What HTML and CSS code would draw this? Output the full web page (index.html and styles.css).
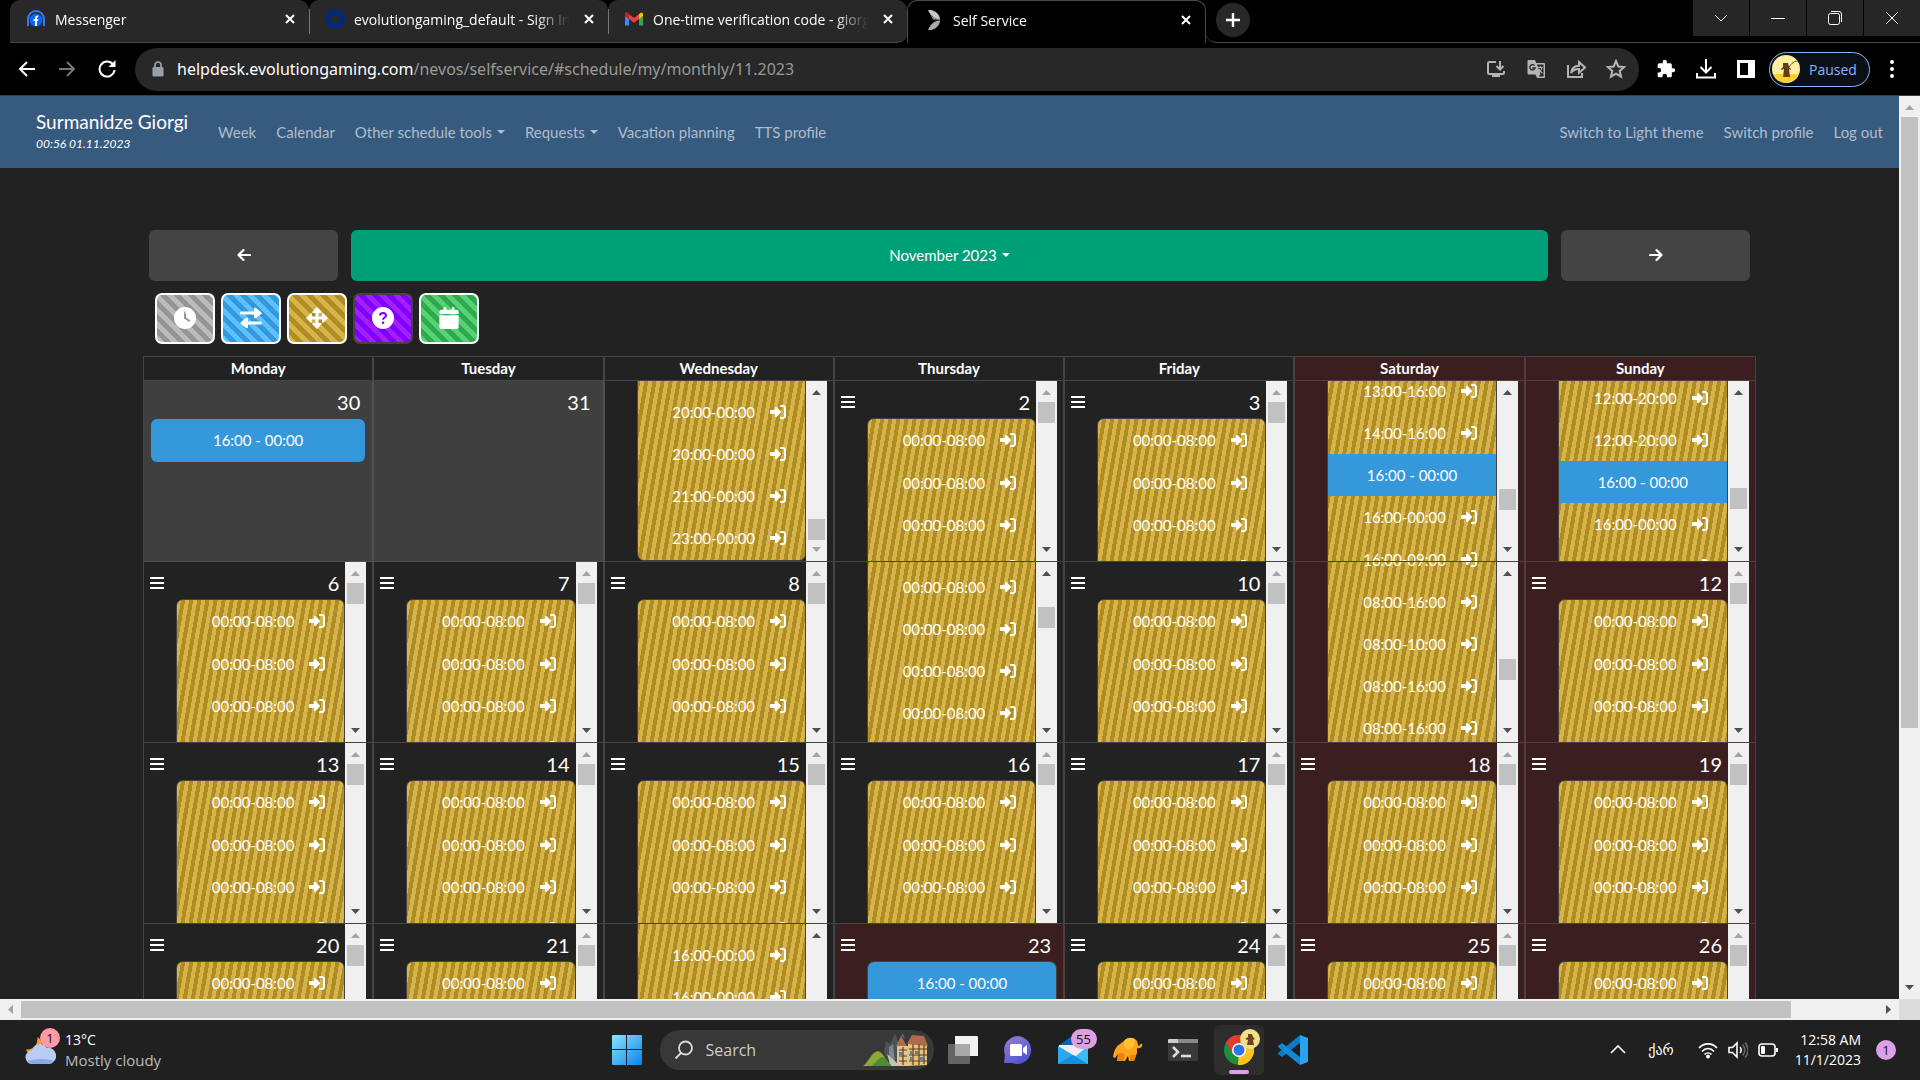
FILE: index.html
```html
<!DOCTYPE html>
<html lang="en">
<head>
<meta charset="utf-8">
<meta name="viewport" content="width=device-width, initial-scale=1">
<title>Self Service</title>
<link rel="stylesheet" href="styles.css">
</head>
<body>
<svg class="sprite" aria-hidden="true">
  <symbol id="i-close" viewBox="0 0 12 12"><path d="M2 2l8 8M10 2l-8 8" stroke="currentColor" stroke-width="2" fill="none"/></symbol>
  <symbol id="i-enter" viewBox="0 0 512 512"><path fill="currentColor" d="M217.900 105.900L340.700 228.700c7.200 7.200 11.300 17.100 11.300 27.300s-4.100 20.100-11.300 27.300L217.900 406.100c-6.400 6.400-15 9.900-24 9.900c-18.700 0-33.900-15.200-33.900-33.900l0-62.100L32 320c-17.700 0-32-14.300-32-32l0-64c0-17.700 14.300-32 32-32l128 0 0-62.100c0-18.700 15.200-33.900 33.900-33.900c9 0 17.600 3.600 24 9.900zM352 416l64 0c17.700 0 32-14.300 32-32l0-256c0-17.700-14.300-32-32-32l-64 0c-17.700 0-32-14.300-32-32s14.300-32 32-32l64 0c53 0 96 43 96 96l0 256c0 53-43 96-96 96l-64 0c-17.700 0-32-14.300-32-32s14.300-32 32-32z"/></symbol>
  <symbol id="i-bars" viewBox="0 0 14 12"><path fill="currentColor" d="M0 0h14v2H0zM0 5h14v2H0zM0 10h14v2H0z"/></symbol>
  <symbol id="i-up" viewBox="0 0 9 5"><path fill="currentColor" d="M0 5L4.500 0L9 5z"/></symbol>
  <symbol id="i-down" viewBox="0 0 9 5"><path fill="currentColor" d="M0 0L4.500 5L9 0z"/></symbol>
  <symbol id="i-left" viewBox="0 0 14 12"><path d="M13 6H2M6.500 1L1.500 6l5 5" stroke="currentColor" stroke-width="2.200" stroke-linecap="round" stroke-linejoin="round" fill="none"/></symbol>
  <symbol id="i-right" viewBox="0 0 14 12"><path d="M1 6h11M7.500 1l5 5-5 5" stroke="currentColor" stroke-width="2.200" stroke-linecap="round" stroke-linejoin="round" fill="none"/></symbol>
</svg>

<header class="tabs">
  <a class="tab" href="#messenger">
    <svg class="favicon" viewBox="0 0 20 20"><path d="M2 17V10a8 8 0 0 1 16 0v7" fill="none" stroke="#3b78e7" stroke-width="2"/><circle cx="10" cy="11" r="6.500" fill="#0866ff"/><path d="M9 17v-5H7.500v-2H9V9c0-1.800 1-2.700 3.200-2.500v1.800c-1 0-1.300.2-1.300 1V10h1.300l-.3 2h-1v5z" fill="#fff"/></svg>
    <span class="tab-title">Messenger</span>
    <svg class="tab-close"><use href="#i-close"/></svg>
  </a>
  <a class="tab" href="#signin">
    <svg class="favicon" viewBox="0 0 20 20"><circle cx="10" cy="10" r="7.200" fill="none" stroke="#00297a" stroke-width="5.500"/></svg>
    <span class="tab-title">evolutiongaming_default - Sign In</span>
    <svg class="tab-close"><use href="#i-close"/></svg>
  </a>
  <a class="tab" href="#mail">
    <svg class="favicon" viewBox="0 0 20 20"><path d="M1 5v11.500h4V9z" fill="#4285f4"/><path d="M19 5v11.500h-4V9z" fill="#34a853"/><path d="M15 5l2-1.300c1-.7 2 .3 2 1.300v2l-4 3z" fill="#fbbc04"/><path d="M1 7V5c0-1.200 1-2 2-1.300l7 5.300 5-4v5l-5 3.700z" fill="#ea4335"/><path d="M1 7V5c0-1.200 1-2 2-1.300L5 5v5z" fill="#c5221f"/></svg>
    <span class="tab-title">One-time verification code - giorgi</span>
    <svg class="tab-close"><use href="#i-close"/></svg>
  </a>
  <a class="tab tab-active" href="#self-service">
    <svg class="favicon" viewBox="0 0 20 20"><path d="M4 0c6-1 12 4 12 9.700C12 9.500 7 7 4 0z" fill="#c4c6c8"/><path d="M4 20c6 1 12-4 12-9.700C12 10.500 7 13 4 20z" fill="#a9abad"/><path d="M4 0c2 5 6 9 12 9.700L9 9.500z" fill="#8e9092"/></svg>
    <span class="tab-title">Self Service</span>
    <svg class="tab-close"><use href="#i-close"/></svg>
  </a>
  <div class="strip-end">
    <button class="new-tab" aria-label="New tab"><svg viewBox="0 0 16 16"><path d="M8 1v14M1 8h14" stroke="#fff" stroke-width="2.400"/></svg></button>
    <div class="window-buttons">
      <button aria-label="Search tabs"><svg viewBox="0 0 14 14"><path d="M1 4l6 6 6-6" class="hair"/></svg></button>
      <button aria-label="Minimize"><svg viewBox="0 0 14 14"><path d="M0 7.500h14" class="hair"/></svg></button>
      <button aria-label="Restore"><svg viewBox="0 0 14 14"><rect x=".5" y="2.500" width="11" height="11" rx="2" class="hair"/><path d="M3 .500h8a2.500 2.500 0 0 1 2.500 2.500v8" class="hair"/></svg></button>
      <button aria-label="Close"><svg viewBox="0 0 14 14"><path d="M1 1l12 12M13 1L1 13" class="hair"/></svg></button>
    </div>
  </div>
</header>

<div class="toolbar">
  <div class="history">
    <button aria-label="Back"><svg viewBox="0 0 18 18"><path d="M17 9H2M9 2L2 9l7 7" class="line"/></svg></button>
    <button aria-label="Forward" class="is-off"><svg viewBox="0 0 18 18"><path d="M1 9h15M9 2l7 7-7 7" class="line"/></svg></button>
    <button aria-label="Reload"><svg viewBox="0 0 18 18"><path d="M15 4.500A7.500 7.500 0 1 0 16.500 10" class="line"/><path d="M17.500 0v7h-7z" fill="currentColor"/></svg></button>
  </div>
  <div class="omnibox">
    <svg class="lock" viewBox="0 0 12 16"><path fill="none" stroke="#9aa0a6" stroke-width="1.700" d="M3 7V4a3 3 0 0 1 6 0v3"/><rect x=".5" y="6" width="11" height="9.500" rx="1.300" fill="#9aa0a6"/></svg>
    <div class="url"><b>helpdesk.evolutiongaming.com</b>/nevos/selfservice/#schedule/my/monthly/11.2023</div>
    <div class="omni-icons">
      <button aria-label="Install"><svg viewBox="0 0 20 20"><path d="M10 3H3.500a1.500 1.500 0 0 0-1.500 1.500v9A1.500 1.500 0 0 0 3.500 15h13a1.500 1.500 0 0 0 1.500-1.500V12M14 2v8M10.500 7L14 10.500 17.500 7" class="soft"/><path d="M6 15h8v3H6z" fill="currentColor"/></svg></button>
      <button aria-label="Translate"><svg viewBox="0 0 20 20"><path d="M2.500 1H9l1.200 3H18a1 1 0 0 1 1 1v13a1 1 0 0 1-1 1h-7l-1.500-3.500H2.500a1 1 0 0 1-1-1V2a1 1 0 0 1 1-1z" fill="#b4b4b4"/><path d="M11 5.500h6.500v12h-5l2-2z" fill="#282828"/><path d="M8.500 6.600A2.600 2.600 0 1 0 9 9H6.500" fill="none" stroke="#282828" stroke-width="1.400"/><path d="M11.800 8.500h5M14.300 7v1.500M16 8.500c-.5 2.500-2 4-3 4.700M12.800 10c.8 2 2 3 3.700 4" fill="none" stroke="#b4b4b4" stroke-width="1.100"/></svg></button>
      <button aria-label="Share"><svg viewBox="0 0 20 20"><path d="M2 6v12h14v-4M5 14c.5-4 3-7 8-7.200V3l6 5.500-6 5.300V10c-3.500 0-6 1-8 4z" class="soft"/></svg></button>
      <button aria-label="Bookmark"><svg viewBox="0 0 20 20"><path d="M10 2l2.300 5.500 6 .5-4.600 3.900 1.400 5.800L10 14.600l-5.100 3.100 1.400-5.800L1.700 8l6-.5z" class="soft"/></svg></button>
    </div>
  </div>
  <div class="extensions">
    <button aria-label="Extensions"><svg viewBox="0 0 24 24"><path fill="currentColor" d="M20.500 11H19V7c0-1.100-.9-2-2-2h-4V3.500a2.500 2.500 0 0 0-5 0V5H4c-1.100 0-2 .9-2 2v3.800h1.500a2.700 2.700 0 0 1 0 5.400H2V20c0 1.100.9 2 2 2h3.800v-1.500a2.700 2.700 0 0 1 5.400 0V22H17c1.100 0 2-.9 2-2v-4h1.500a2.500 2.500 0 0 0 0-5z"/></svg></button>
    <button aria-label="Downloads"><svg viewBox="0 0 20 20"><path d="M10 0v13M4.500 8l5.500 5.500L15.500 8M1 14v4.500h18V14" class="line"/></svg></button>
    <button aria-label="Side panel"><svg viewBox="0 0 20 20"><path fill="currentColor" fill-rule="evenodd" d="M1 1h18v18H1zM4 4v12h8V4z"/></svg></button>
  </div>
  <button class="profile">
    <svg viewBox="0 0 28 28"><circle cx="14" cy="14" r="14" fill="#fdf0a0"/><path d="M1 19a14 14 0 0 0 26 0z" fill="#fdd02f"/><path d="M11 8h5l1 4 2 2v1l-2-1 1 8h-7l1-8-3 1v-1l2-2z" fill="#6b3a1c"/><path d="M17 12c3-4 5-6 9-6" fill="none" stroke="#6b3a1c" stroke-width="1"/></svg>
    Paused
  </button>
  <button class="kebab" aria-label="Menu"><svg viewBox="0 0 4 18"><circle cx="2" cy="2" r="2" fill="#fff"/><circle cx="2" cy="9" r="2" fill="#fff"/><circle cx="2" cy="16" r="2" fill="#fff"/></svg></button>
</div>

<div class="viewport">
  <main class="page">
    <nav class="navbar">
      <a class="brand" href="#home">Surmanidze Giorgi<small>00:56 01.11.2023</small></a>
      <a href="#week">Week</a>
      <a href="#calendar">Calendar</a>
      <a href="#tools" class="has-caret">Other schedule tools</a>
      <a href="#requests" class="has-caret">Requests</a>
      <a href="#vacation">Vacation planning</a>
      <a href="#tts">TTS profile</a>
      <a href="#theme" class="push">Switch to Light theme</a>
      <a href="#profile">Switch profile</a>
      <a href="#logout">Log out</a>
    </nav>

    <section class="schedule">
      <div class="month-bar">
        <button class="step" aria-label="Previous month"><svg><use href="#i-left"/></svg></button>
        <button class="month has-caret">November 2023</button>
        <button class="step" aria-label="Next month"><svg><use href="#i-right"/></svg></button>
      </div>

      <div class="filters">
        <button class="filter gray" aria-label="Overtime"><svg viewBox="0 0 512 512"><path fill="#fff" fill-rule="evenodd" d="M256 0a256 256 0 1 1 0 512A256 256 0 1 1 256 0zM232 120V256c0 8 4 15.500 10.700 20l96 64c11 7.400 25.900 4.400 33.300-6.700s4.400-25.900-6.700-33.300L280 243.200V120c0-13.300-10.700-24-24-24s-24 10.700-24 24z"/></svg></button>
        <button class="filter blue" aria-label="Swap"><svg viewBox="0 0 22 22"><path fill="#fff" d="M1 4.500h13V2c0-1.200 1.200-1.600 2-.9l5.200 4.200c.6.500.6 1.300 0 1.800L16 11c-.8.700-2 .2-2-.9V7.500H1c-1.300 0-1.300-3 0-3zM21 14.500H8V12c0-1.200-1.200-1.600-2-.9L.800 15.300c-.6.500-.6 1.300 0 1.800L6 21c.8.700 2 .2 2-.9v-2.600h13c1.300 0 1.300-3 0-3z"/></svg></button>
        <button class="filter gold" aria-label="Move"><svg viewBox="0 0 22 22"><path fill="#fff" d="M11 0l4.500 4.500c.5 1-.1 1.500-.8 1.500h-2.200v3.500H16V7.300c0-.8.700-1.300 1.500-.8L22 11l-4.500 4.500c-.8.500-1.500 0-1.500-.8v-2.200h-3.500V16h2.200c.8 0 1.300.6.800 1.500L11 22l-4.500-4.500c-.5-.9 0-1.500.8-1.500h2.200v-3.500H6v2.200c0 .8-.7 1.300-1.500.8L0 11l4.500-4.500c.8-.5 1.500 0 1.500.8v2.200h3.500V6H7.300c-.8 0-1.300-.5-.8-1.500z"/></svg></button>
        <button class="filter purple" aria-label="Unknown"><svg viewBox="0 0 22 22"><circle cx="11" cy="11" r="11" fill="#fff"/><path d="M8 8.500c0-3.500 6-3.500 6 0 0 2-3 2-3 4.200" fill="none" stroke="#8000ff" stroke-width="2"/><circle cx="11" cy="15.800" r="1.300" fill="#8000ff"/></svg></button>
        <button class="filter green" aria-label="Vacation"><svg viewBox="-32 0 512 512"><path fill="#fff" d="M96 32V64H48C21.500 64 0 85.500 0 112v48H448V112c0-26.500-21.500-48-48-48H352V32c0-17.700-14.300-32-32-32s-32 14.300-32 32V64H160V32c0-17.700-14.300-32-32-32S96 14.300 96 32zM448 192H0V464c0 26.500 21.500 48 48 48H400c26.500 0 48-21.500 48-48V192z"/></svg></button>
      </div>

      <table class="calendar">
        <thead>
          <tr><th>Monday</th><th>Tuesday</th><th>Wednesday</th><th>Thursday</th><th>Friday</th><th class="holiday">Saturday</th><th class="holiday">Sunday</th></tr>
        </thead>
        <tbody id="days"></tbody>
      </table>
    </section>
  </main>

  <div class="bar bar-y">
    <svg class="arrow is-off"><use href="#i-up"/></svg>
    <i class="thumb"></i>
    <svg class="arrow"><use href="#i-down"/></svg>
  </div>
  <div class="bar bar-x">
    <svg class="arrow-side is-off" viewBox="0 0 5 9"><path fill="currentColor" d="M5 0v9L0 4.500z"/></svg>
    <i class="thumb"></i>
    <svg class="arrow-side" viewBox="0 0 5 9"><path fill="currentColor" d="M0 0v9l5-4.500z"/></svg>
  </div>
  <div class="corner"></div>
</div>

<footer class="taskbar">
  <div class="weather">
    <div class="weather-icon">
      <svg viewBox="0 0 32 32"><path d="M13 3c0 9-4 13-12 13 2 5 7 7 11 5l6-7c0-5-2-9-5-11z" fill="#f5a12c"/><path d="M8 31a7 7 0 0 1-1-14 8.500 8.500 0 0 1 15-3 8 8 0 0 1 3 17z" fill="#b7cdf3"/><path d="M8 31a7 7 0 0 1-5-3c6-3 20-3 27 0a8 8 0 0 1-5 3z" fill="#86a9ea"/></svg>
      <span class="badge pink">1</span>
    </div>
    <p>13°C<small>Mostly cloudy</small></p>
  </div>

  <div class="apps">
    <button class="app" aria-label="Start"><svg viewBox="0 0 30 30"><defs><linearGradient id="win" x2="1" y2="1"><stop stop-color="#8be4ff"/><stop offset="1" stop-color="#0a84ea"/></linearGradient></defs><path fill="url(#win)" d="M0 1a1 1 0 0 1 1-1h13v14H0zM15 0h14a1 1 0 0 1 1 1v13H15zM0 15h14v15H1a1 1 0 0 1-1-1zM15 15h15v14a1 1 0 0 1-1 1H15z"/></svg></button>
    <label class="search">
      <svg class="lens" viewBox="0 0 20 20"><circle cx="11.500" cy="8" r="6.500" fill="none" stroke="#ddd" stroke-width="1.800"/><path d="M7 13L1.500 18.500" stroke="#ddd" stroke-width="1.800"/></svg>
      <input type="text" placeholder="Search" aria-label="Search">
      <svg class="town" viewBox="0 0 66 34"><path d="M0 33c6-4 8-14 15-15 6 2 8 10 13 15z" fill="#8fa63c"/><path d="M8 33c5-3 8-9 12-9 4 2 6 6 8 9z" fill="#4e8b35"/><path d="M23 8l4 3 5-10 4 9v20l-8 3-7-14z" fill="#4b5358"/><path d="M26 14l4-3 2 20h-6z" fill="#7d868a"/><path d="M24 21l10 9 2 3h-8z" fill="#c9c5b4"/><path d="M34 13h12v20H34z" fill="#e2c48f"/><path d="M45 10h19v22l-19 1z" fill="#e7c377"/><path d="M33 13l5-10 6 10zM44 11l5-9 12 1 4 10z" fill="#b06a4c"/><path d="M38 3l2-3 2 6z" fill="#3f6c9a"/><path d="M36 17h8M36 23h8M36 28h8M46 16h18M46 22h18M46 28h18M50 11v21M56 11v21M61 12v19M40 14v18" stroke="#5a3d2b" stroke-width="1.200"/><path d="M36 19h3v3h-3zM47 18h2v3h-2zM52 18h3v3h-3zM57 24h3v3h-3zM47 24h2v3h-2z" fill="#4f86a8"/></svg>
    </label>
    <button class="app" aria-label="Task view"><svg viewBox="0 0 30 30"><path d="M7 1h22a1 1 0 0 1 1 1v19H7z" fill="#f2f2f2"/><rect y="9" width="22" height="20" rx="1" fill="#6c6c6c" opacity=".9"/><path d="M7 9h15v12H7z" fill="#a9a9a9"/></svg></button>
    <button class="app" aria-label="Chat"><svg viewBox="0 0 30 30"><defs><linearGradient id="chat" x2=".6" y2="1"><stop stop-color="#9a7fd0"/><stop offset="1" stop-color="#4f56d6"/></linearGradient></defs><path d="M15 1a14 14 0 1 1-6 27H1l1-8A14 14 0 0 1 15 1z" fill="url(#chat)"/><rect x="7" y="9" width="12" height="12" rx="1.500" fill="#fff"/><path d="M20 13l4-3v10l-4-3z" fill="#fff"/></svg></button>
    <button class="app" aria-label="Mail"><svg viewBox="0 0 30 30"><path d="M0 11L14 1l16 10v5H0z" fill="#0a63b8"/><path d="M1 10h28v8l-14 8L1 17z" fill="#ededf2"/><path d="M0 11l30 18H0z" fill="#2aa9ee"/><path d="M30 11v18H8z" fill="#38bdf5"/><path d="M0 29h30L15 20z" fill="#178edb"/></svg><span class="badge lilac wide">55</span></button>
    <button class="app" aria-label="Elephant"><svg viewBox="0 0 30 30"><path d="M11 6c3-4 10-4 13 0 1 3 1 5 2 5s1-3 3-2c1 3-2 5-5 4v5l-3 8h-5l-1-5-3 5H4l1-7-3 4-2-1C1 16 3 11 7 9z" fill="#fca51c"/><path d="M11 6c3-4 10-4 11-1l-1 6-5 4-5-3z" fill="#ffc22e"/><path d="M5 19c3-2 6-1 7 1l-2 6H4zM17 20h6l-2 6h-4z" fill="#f07f13"/></svg></button>
    <button class="app" aria-label="Terminal"><svg viewBox="0 0 30 30"><rect y="4" width="30" height="22" rx="1.500" fill="#3a3a3a"/><path d="M1 4h28a1 1 0 0 1 1 1v3H0V5a1 1 0 0 1 1-1z" fill="#8a8a8a"/><path d="M1 4h9v4H0V5z" fill="#ccc"/><path d="M5 12l5 5-5 5" fill="none" stroke="#ddd" stroke-width="2.600"/><path d="M13 21h10" stroke="#ddd" stroke-width="2.600"/></svg></button>
    <button class="app app-open" aria-label="Chrome"><svg viewBox="0 0 30 30"><circle cx="15" cy="15" r="15" fill="#1e8e3e"/><path d="M15 15L28 7.500A15 15 0 0 1 14 30z" fill="#fcc31e"/><path d="M2 7.500A15 15 0 0 1 28 7.500H15l-6.500 11z" fill="#e33b2e"/><circle cx="15" cy="15" r="7" fill="#fff"/><circle cx="15" cy="15" r="5.500" fill="#2a74e8"/></svg><svg class="avatar" viewBox="0 0 20 20"><circle cx="10" cy="10" r="10" fill="#efe08a"/><path d="M8 5h4l1 3 2 2-2 1 1 5H7l1-5-3-1 3-2z" fill="#70401f"/></svg></button>
    <button class="app" aria-label="Code"><svg viewBox="0 0 30 30"><path d="M22 0l8 3v24l-8 3z" fill="#2aa3ee"/><path d="M22 0v8L4 22l-4-3v-1z" fill="#0a7bc8"/><path d="M22 30v-8L4 8l-4 3v1z" fill="#1288d6"/></svg></button>
  </div>

  <div class="tray">
    <svg class="tray-icon" viewBox="0 0 18 18"><path d="M2 12l7-7 7 7" class="thin"/></svg>
    <span class="lang">ქარ</span>
    <div class="status">
      <svg class="tray-icon" viewBox="0 0 20 18"><path d="M1 7c5-5.500 13-5.500 18 0M4 10.500c3.500-4 8.500-4 12 0M6.500 13.500c2-2 5-2 7 0" class="thin"/><circle cx="10" cy="15.500" r="2" fill="#fff"/></svg>
      <svg class="tray-icon" viewBox="0 0 20 18"><path d="M1 6.500h3.500L9 2v14l-4.500-4.500H1zM12 6c1.500 1.500 1.500 4.500 0 6" class="thin"/><path d="M14.500 3.500c3 3 3 8 0 11M17 1.500c4 4.500 4 11 0 15" class="thin dim"/></svg>
      <svg class="tray-icon" viewBox="0 0 20 18"><rect x="1" y="3" width="16" height="12" rx="3" class="thin"/><path d="M18 7h2v4h-2z" fill="#fff"/><rect x="3" y="5" width="4" height="8" rx="1" fill="#fff"/></svg>
    </div>
    <p class="clock">12:58 AM<br>11/1/2023</p>
    <span class="badge lilac">1</span>
  </div>
</footer>
<script src="calendar.js"></script>
</body>
</html>
```
FILE: styles.css
```css
* { box-sizing: border-box; }

:root {
  --ui: "Open Sans", "Noto Sans", sans-serif;
  --line: #444;
  --gold: repeating-linear-gradient(100deg, #d6b34b, #d6b34b 4px, #b08d23 4px, #b08d23 8px);
}

body {
  margin: 0;
  height: 100vh;
  display: flex;
  flex-direction: column;
  overflow: hidden;
  background: #202020;
  color: #fff;
  font-family: var(--ui);
}

button, input {
  font: inherit;
  color: inherit;
  background: none;
  border: 0;
  padding: 0;
}
button { display: flex; align-items: center; justify-content: center; }
a { color: inherit; text-decoration: none; }
p { margin: 0; }
svg { display: block; flex: none; }
.sprite { position: absolute; width: 0; height: 0; }

.line { fill: none; stroke: currentColor; stroke-width: 2; }
.hair { fill: none; stroke: #fff; stroke-width: 1; }
.soft { fill: none; stroke: #b4b4b4; stroke-width: 2; }
.thin { fill: none; stroke: #fff; stroke-width: 1.6; }
.dim { stroke: #666; }

/* browser tabs */
.tabs {
  display: flex;
  height: 43px;
  padding-left: 10px;
  background: #000;
}
.tab {
  flex: 0 1 299px;
  min-width: 0;
  display: flex;
  align-items: center;
  gap: 9px;
  padding: 0 13px 4px 16px;
  background: #282828;
  border-bottom: 1px solid #4a4a4a;
  border-radius: 10px 10px 0 0;
  font-size: 14px;
}
.tab + .tab:not(.tab-active) { background: linear-gradient(#777, #777) 0 9px / 1px 25px no-repeat #282828; }
.tab:nth-child(3) { border-bottom-right-radius: 10px; }
.tab-active {
  background: #000;
  border: 1px solid #4a4a4a;
  border-bottom: 0;
}
.favicon { width: 20px; height: 20px; }
.tab-title {
  flex: 1;
  overflow: hidden;
  white-space: nowrap;
  mask-image: linear-gradient(90deg, #000 82%, transparent 98%);
}
.tab-close { width: 12px; height: 12px; }
.strip-end {
  flex: 1;
  display: flex;
  justify-content: space-between;
  align-items: flex-start;
  border-bottom: 1px solid #4a4a4a;
  border-bottom-left-radius: 10px;
}
.new-tab {
  width: 34px;
  height: 34px;
  margin: 3px 0 0 10px;
  border-radius: 50%;
  background: #282828;
}
.new-tab svg { width: 16px; }
.window-buttons { display: flex; }
.window-buttons button { width: 57px; height: 36px; border-left: 1px solid #000; background: #262626; }
.window-buttons svg { width: 14px; height: 14px; }

/* toolbar */
.toolbar {
  display: flex;
  align-items: center;
  height: 53px;
  padding: 0 26px 0 18px;
  background: #000;
  border-bottom: 1px solid #3c3c3c;
}
.history { display: flex; gap: 22px; margin-right: 19px; }
.history svg { width: 18px; }
.history .is-off { color: #777; }
.omnibox {
  flex: 1;
  display: flex;
  align-items: center;
  height: 43px;
  padding: 0 13px 0 17px;
  border-radius: 22px;
  background: #282828;
}
.lock { width: 12px; height: 16px; }
.url { flex: 1; margin-left: 13px; font-family: "Noto Sans", sans-serif; font-size: 16px; color: #999; white-space: nowrap; }
.url b { color: #fff; font-weight: 400; }
.omni-icons { display: flex; gap: 20px; color: #b4b4b4; }
.omni-icons svg { width: 20px; }
.extensions { display: flex; gap: 20px; margin: 0 13px 0 17px; }
.extensions svg { width: 20px; }
.profile {
  gap: 9px;
  width: 101px;
  height: 35px;
  padding-right: 10px;
  border: 1px solid #8ab4f8;
  border-radius: 18px;
  background: #0b1018;
  color: #8ab4f8;
  font-size: 14px;
}
.profile svg { width: 28px; }
.kebab { margin-left: 20px; }
.kebab svg { width: 4px; }

/* page and its scrollbars */
.viewport {
  flex: 1;
  min-height: 0;
  display: grid;
  grid-template: minmax(0, 1fr) 21px / minmax(0, 1fr) 21px;
}
.page {
  overflow: hidden;
  background: #222;
  font-family: Lato, sans-serif;
  font-size: 15px;
}
.bar, .scroll {
  display: flex;
  align-items: center;
  justify-content: space-between;
  background: #f0f0f0;
  color: #505050;
}
.bar .is-off, .scroll .is-off { color: #a3a3a3; }
.thumb { background: #c1c1c1; }
.arrow { width: 9px; height: 5px; }
.arrow-side { width: 5px; height: 9px; }
.bar-y { flex-direction: column; padding: 9px 0; }
.bar-y .thumb { width: 17px; flex: 0 0 69%; margin: 7px 0 auto; }
.bar-x { padding: 0 8px; }
.bar-x .thumb { height: 17px; flex: 0 0 94%; margin: 0 auto 0 8px; }
.corner { background: #dcdcdc; }

/* site navigation */
.navbar {
  display: flex;
  align-items: center;
  gap: 20px;
  height: 72px;
  padding: 0 16px 0 36px;
  background: #375a7f;
  color: #afbdcc;
  white-space: nowrap;
}
.brand { margin-right: 10px; font-size: 19px; line-height: 24px; color: #fff; }
.brand small { display: block; font-size: 12px; line-height: 20px; font-style: italic; }
.push { margin-left: auto; }
.has-caret::after {
  content: "";
  display: inline-block;
  margin-left: 5px;
  vertical-align: 4px;
  border: 4px solid transparent;
  border-top-color: currentColor;
  border-bottom: 0;
}

/* month picker and filters */
.schedule { padding: 62px 143px 0; }
.month-bar { display: flex; gap: 13px; padding: 0 6px; }
.month-bar button { height: 51px; padding-bottom: 2px; border-radius: 6px; }
.step { flex: 0 0 189px; background: #444; }
.step svg { width: 14px; height: 12px; }
.month { flex: 1; background: #00a077; }
.filters { display: flex; gap: 6px; padding: 12px; }
.filter {
  width: 60px;
  height: 51px;
  padding-bottom: 1px;
  border: 2px solid #fff;
  border-radius: 7px;
  background: repeating-linear-gradient(45deg, var(--a), var(--a) 5px, var(--b) 5px, var(--b) 10px);
}
.filter svg { width: 22px; height: 22px; }
.gray { --a: #bbb; --b: #959595; }
.blue { --a: #5dc0ff; --b: #3498db; }
.gold { --a: #d6b34b; --b: #b08d23; }
.purple { --a: #a020ff; --b: #8000ff; border-color: #444; }
.green { --a: #58d074; --b: #30a84e; }

/* calendar */
.calendar {
  width: 100%;
  table-layout: fixed;
  border-spacing: 0;
  border-left: 1px solid var(--line);
}
.calendar th, .calendar td {
  padding: 0;
  border-right: 2px solid var(--line);
  border-bottom: 1px solid var(--line);
}
.calendar th:last-child, .calendar td:last-child { border-right-width: 1px; }
.calendar th { height: 25px; padding-bottom: 2px; border-top: 1px solid var(--line); line-height: 20px; }
.calendar .holiday { background: #3a1e20; border-color: #4f4040; }
.calendar .outside { background: #3f3f3f; border-color: #505050; }
.cell { display: flex; height: 180px; padding: 0 6px; overflow: hidden; }
.pane { flex: 1; min-width: 0; overflow: hidden; }
.day {
  display: flex;
  align-items: center;
  justify-content: space-between;
  height: 37px;
  padding: 4px 6px 0 0;
}
.day svg { width: 14px; height: 12px; }
.day time { margin-left: auto; font-size: 20px; line-height: 32px; }
.shifts {
  margin: 0 0 1px 26px;
  padding: 0;
  list-style: none;
  overflow: hidden;
  border: 1px solid var(--line);
  border-radius: 7px;
  background: var(--gold);
}
.shifts li:first-child, .shifts li:last-child { min-height: 43px; }
.shifts button {
  width: 100%;
  height: 42px;
  gap: 15px;
  padding-left: 16px;
}
.shifts svg { width: 16px; height: 16px; }
.shifts .mine { height: 42px; line-height: 42px; text-align: center; background: #3498db; }
.outside .shifts { margin-left: 0; border-color: #3f3f3f; }
.scroll { position: relative; flex: 0 0 21px; flex-direction: column; padding: 9px 0; }
.scroll .thumb { position: absolute; left: 2px; width: 17px; height: 21px; }

/* taskbar */
.taskbar {
  display: grid;
  grid-template-columns: 1fr auto 1fr;
  align-items: center;
  height: 60px;
  background: #202020;
  font-size: 14px;
}
.weather { display: flex; gap: 9px; padding-left: 25px; line-height: 20px; }
.weather small { display: block; font-size: 15px; color: #bbb; }
.weather-icon { position: relative; width: 31px; }
.weather-icon svg { width: 31px; margin-top: 4px; }
.badge {
  width: 20px;
  height: 20px;
  border-radius: 10px;
  color: #111;
  font-size: 13px;
  line-height: 20px;
  text-align: center;
}
.weather-icon .badge, .app .badge { position: absolute; top: -2px; right: -4px; }
.pink { background: #ff99a4; }
.lilac { background: #dda0e6; }
.apps { display: flex; align-items: center; }
.app { position: relative; width: 55px; height: 50px; }
.app svg { width: 30px; height: 30px; }
.app .wide { top: 4px; right: 4px; width: 26px; }
.app-open { width: 50px; margin: 0 2px 0 3px; border-radius: 6px; background: #2d2d2d; }
.app-open::after {
  content: "";
  position: absolute;
  bottom: 1px;
  width: 20px;
  height: 4px;
  border-radius: 2px;
  background: #dda0e6;
}
.app .avatar { position: absolute; top: 4px; right: 4px; width: 20px; height: 20px; }
.search {
  display: flex;
  align-items: center;
  width: 274px;
  height: 40px;
  margin: 0 2px 0 5px;
  padding: 0 5px 0 14px;
  border-radius: 20px;
  background: #383838;
}
.lens { width: 20px; }
.search input { flex: 1; min-width: 0; margin-left: 12px; font-size: 16px; }
.search input::placeholder { color: #ccc; opacity: 1; }
.town { width: 66px; height: 34px; }
.tray { display: flex; align-items: center; justify-content: flex-end; padding-right: 24px; }
.tray-icon { width: 20px; height: 18px; }
.lang { margin: 0 24px 0 20px; font-family: "DejaVu Sans", sans-serif; }
.status { display: flex; gap: 10px; }
.clock { margin: 0 15px 0 17px; line-height: 20px; text-align: right; }
```
FILE: calendar.js
```js
// Shift lists per day. "*" marks the employee's own shift.
const NIGHT = "00:00-08:00";
const nights = count => Array(count).fill(NIGHT);
const OWN = "*16:00 - 00:00";

// Days with their own list, scroll offset and thumb position.
const special = {
  "30": { outside: true, shifts: [OWN] },
  "31": { outside: true, shifts: [] },
  "1": { shifts: ["20:00-00:00", "20:00-00:00", "20:00-00:00", "21:00-00:00", "23:00-00:00"], scroll: 71, thumb: 138, end: true },
  "4": { shifts: ["12:00-20:00", "13:00-16:00", "14:00-16:00", OWN, "16:00-00:00", "16:00-09:00"], scroll: 92, thumb: 108 },
  "5": { shifts: ["12:00-20:00", "12:00-20:00", "12:00-20:00", OWN, "16:00-00:00", "16:00-00:00"], scroll: 85, thumb: 107 },
  "9": { shifts: nights(6), scroll: 77, thumb: 45 },
  "11": { shifts: ["08:00-16:00", "16:00-09:00", "08:00-16:00", "08:00-10:00", "08:00-16:00", "08:00-16:00"], scroll: 104, thumb: 97 },
  "22": { shifts: ["16:00-00:00", "16:00-00:00", "16:00-00:00", "16:00-00:00", "16:00-00:00"], scroll: 71, thumb: 100 },
  "23": { holiday: true, fixed: true, shifts: [OWN] }
};

const weeks = [
  [30, 31, 1, 2, 3, 4, 5],
  [6, 7, 8, 9, 10, 11, 12],
  [13, 14, 15, 16, 17, 18, 19],
  [20, 21, 22, 23, 24, 25, 26]
];

const icon = (name, cls = "") => `<svg class="${cls}"><use href="#i-${name}"/></svg>`;

function shift(text) {
  return text[0] === "*"
    ? `<li class="mine">${text.slice(1)}</li>`
    : `<li><button>${text}${icon("enter")}</button></li>`;
}

function dayCell(day, column) {
  const d = special[day] || { shifts: nights(4) };
  const cls = d.outside ? "outside" : d.holiday || column > 4 ? "holiday" : "";
  const list = d.shifts.length ? `<ul class="shifts">${d.shifts.map(shift).join("")}</ul>` : "";
  const bar = d.outside || d.fixed ? "" :
    `<div class="scroll">${icon("up", d.scroll ? "arrow" : "arrow is-off")}
      <i class="thumb" style="top:${d.thumb || 21}px"></i>
      ${icon("down", d.end ? "arrow is-off" : "arrow")}</div>`;
  return `<td class="${cls}"><div class="cell">
    <div class="pane" data-scroll="${d.scroll || 0}">
      <div class="day">${d.outside ? "" : icon("bars")}<time>${day}</time></div>${list}
    </div>${bar}</div></td>`;
}

document.getElementById("days").innerHTML =
  weeks.map(week => `<tr>${week.map(dayCell).join("")}</tr>`).join("");

document.querySelectorAll(".pane").forEach(pane => {
  pane.scrollTop = Number(pane.dataset.scroll);
});
```
